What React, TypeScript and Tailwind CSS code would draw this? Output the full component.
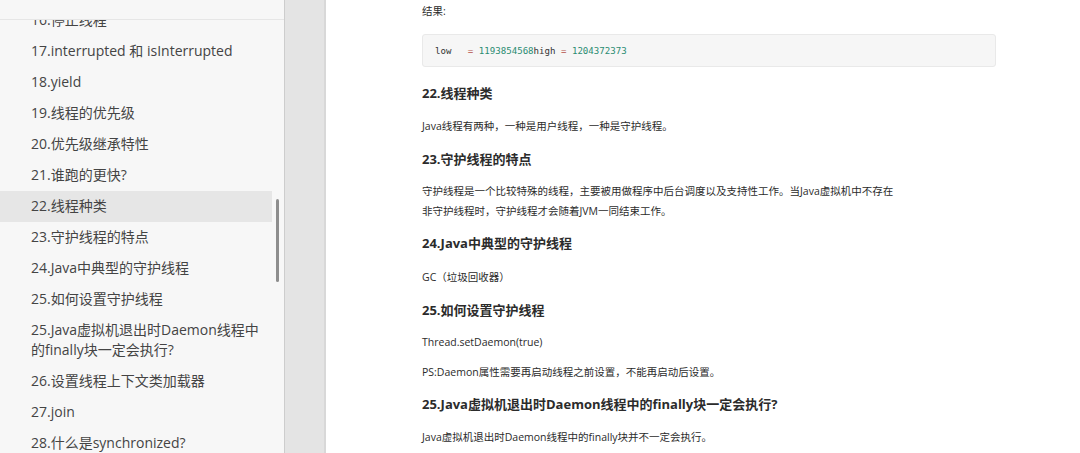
import React from "react";

const FONT = { fontFamily: '"Open Sans", "Noto Sans CJK SC", sans-serif' };

const items: { t: string; active?: boolean }[] = [
  { t: "16.停止线程" },
  { t: "17.interrupted 和 isInterrupted" },
  { t: "18.yield" },
  { t: "19.线程的优先级" },
  { t: "20.优先级继承特性" },
  { t: "21.谁跑的更快?" },
  { t: "22.线程种类", active: true },
  { t: "23.守护线程的特点" },
  { t: "24.Java中典型的守护线程" },
  { t: "25.如何设置守护线程" },
  { t: "25.Java虚拟机退出时Daemon线程中的finally块一定会执行?" },
  { t: "26.设置线程上下文类加载器" },
  { t: "27.join" },
  { t: "28.什么是synchronized?" },
];

function Sidebar() {
  return (
    <div className="relative w-[284px] h-full bg-[#f7f7f7] flex flex-col shrink-0">
      <div className="h-[20px] border-b border-[#e6e6e6] bg-[#f7f7f7] shrink-0" />
      <div className="flex-1 overflow-hidden">
        <ul className="-mt-[15px] pr-[12px]">
          {items.map((it, i) => (
            <li
              key={i}
              className={
                "pl-[31px] pr-[8px] pt-[5px] pb-[6px] text-[14px] leading-[20px] text-[#444] " +
                (it.active ? "bg-[#e6e6e6]" : "")
              }
            >
              {it.t}
            </li>
          ))}
        </ul>
      </div>
      <div className="absolute left-[276px] top-[199px] w-[3px] h-[83px] rounded-full bg-[#8e8e8e]" />
    </div>
  );
}

function H({ children, mt }: { children: React.ReactNode; mt: string }) {
  return <h2 className={"text-[13px] leading-[24px] font-bold text-[#2b2b2b] " + mt}>{children}</h2>;
}

function P({ children, mt }: { children: React.ReactNode; mt: string }) {
  return <p className={"text-[10.5px] leading-[20px] text-[#2b2b2b] " + mt}>{children}</p>;
}

export default function App() {
  return (
    <div className="flex w-[1080px] h-[453px] overflow-hidden bg-white" style={FONT}>
      <Sidebar />
      <div className="w-[42px] h-full bg-[#e4e4e4] border-l border-[#cdcdcd] border-r-[2px] border-r-[#d8d8d8] shrink-0" />
      <div className="flex-1 pl-[96px]">
        <div className="w-[574px]">
          <P mt="mt-[1px]">结果:</P>
          <div className="mt-[13px] h-[33px] rounded-[3px] border border-[#e9e9e9] bg-[#f6f6f6] flex items-center pl-[12px]">
            <pre
              className="text-[9.1px] leading-[14px] text-[#333]"
              style={{ fontFamily: '"DejaVu Sans Mono", monospace' }}
            >
              {"low   "}
              <span className="text-[#b5524b]">=</span>{" "}
              <span className="text-[#2b8c72]">1193854568</span>
              {"high "}
              <span className="text-[#b5524b]">=</span>{" "}
              <span className="text-[#2b8c72]">1204372373</span>
            </pre>
          </div>
          <H mt="mt-[14px]">22.线程种类</H>
          <P mt="mt-[11px]">Java线程有两种，一种是用户线程，一种是守护线程。</P>
          <H mt="mt-[11px]">23.守护线程的特点</H>
          <P mt="mt-[10px]">
            守护线程是一个比较特殊的线程，主要被用做程序中后台调度以及支持性工作。当Java虚拟机中不存在
            <br />
            非守护线程时，守护线程才会随着JVM一同结束工作。
          </P>
          <H mt="mt-[10px]">24.Java中典型的守护线程</H>
          <P mt="mt-[12px]">GC（垃圾回收器）</P>
          <H mt="mt-[11px]">25.如何设置守护线程</H>
          <P mt="mt-[10px]">Thread.setDaemon(true)</P>
          <P mt="mt-[10px]">PS:Daemon属性需要再启动线程之前设置，不能再启动后设置。</P>
          <H mt="mt-[10px]">25.Java虚拟机退出时Daemon线程中的finally块一定会执行?</H>
          <P mt="mt-[11px]">Java虚拟机退出时Daemon线程中的finally块并不一定会执行。</P>
        </div>
      </div>
    </div>
  );
}
